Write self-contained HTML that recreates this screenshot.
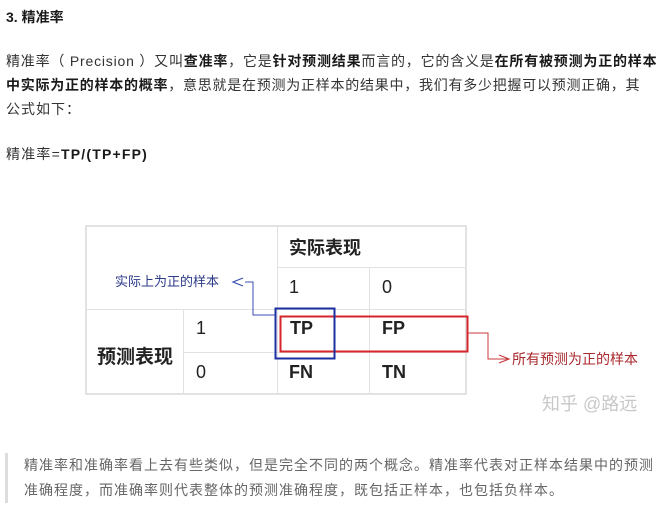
<!DOCTYPE html>
<html><head><meta charset="utf-8"><style>
body{margin:0;width:664px;height:514px;background:#fff;font-family:"Liberation Sans","Noto Sans CJK SC",sans-serif;color:#333;position:relative;overflow:hidden}
.a{position:absolute;white-space:nowrap;font-size:14px;line-height:24px}
b{color:#1a1a1a}
.c{position:absolute;font-size:18px;color:#222}
</style></head><body>
<div class="a" style="left:6px;top:5px;font-weight:bold;font-size:14px;color:#1a1a1a">3. 精准率</div>
<div class="a" style="left:6px;top:49px;letter-spacing:0.8px">精准率（ Precision ）又叫<b>查准率</b>，它是<b>针对预测结果</b>而言的，它的含义是<b>在所有被预测为正的样本</b></div>
<div class="a" style="left:6px;top:73px;letter-spacing:0.75px"><b>中实际为正的样本的概率</b>，意思就是在预测为正样本的结果中，我们有多少把握可以预测正确，其</div>
<div class="a" style="left:6px;top:97px;letter-spacing:1px">公式如下：</div>
<div class="a" style="left:6px;top:142px;letter-spacing:1.2px;font-size:14px">精准率=<b>TP/(TP+FP)</b></div>

<div style="position:absolute;left:85px;top:225px;width:382px;height:170px;border:2px solid #e2e2e2;box-sizing:border-box"></div>
<div style="position:absolute;left:277px;top:225px;width:1px;height:170px;background:#e2e2e2"></div>
<div style="position:absolute;left:183px;top:309px;width:1px;height:86px;background:#e2e2e2"></div>
<div style="position:absolute;left:369px;top:267px;width:1px;height:128px;background:#e2e2e2"></div>
<div style="position:absolute;left:277px;top:267px;width:190px;height:1px;background:#e2e2e2"></div>
<div style="position:absolute;left:85px;top:309px;width:382px;height:1px;background:#e2e2e2"></div>
<div style="position:absolute;left:183px;top:352px;width:284px;height:1px;background:#e2e2e2"></div>

<div class="c" style="left:289px;top:234px;font-weight:bold">实际表现</div>
<div class="c" style="left:289px;top:277px">1</div>
<div class="c" style="left:382px;top:277px">0</div>
<div class="c" style="left:97px;top:342px;font-weight:bold;font-size:19px">预测表现</div>
<div class="c" style="left:196px;top:318px">1</div>
<div class="c" style="left:196px;top:362px">0</div>
<div class="c" style="left:290px;top:318px;font-weight:bold">TP</div>
<div class="c" style="left:382px;top:318px;font-weight:bold">FP</div>
<div class="c" style="left:289px;top:362px;font-weight:bold">FN</div>
<div class="c" style="left:382px;top:362px;font-weight:bold">TN</div>

<svg style="position:absolute;left:0;top:0" width="664" height="514">
<rect x="280.5" y="316.5" width="187" height="35" fill="none" stroke="#d6262b" stroke-width="2"/>
<rect x="275.5" y="308.5" width="59" height="50" fill="none" stroke="#1b2fa0" stroke-width="2"/>
<polyline points="245,282 253,282 253,315 275,315" fill="none" stroke="#3a4db0" stroke-width="1"/>
<polyline points="243,278 233,282 243,286" fill="none" stroke="#3a4db0" stroke-width="1.2"/>
<polyline points="468,333 488,333 488,359 508,359" fill="none" stroke="#c8383c" stroke-width="1"/>
<polyline points="499,355 509,359 499,363" fill="none" stroke="#c8383c" stroke-width="1.2"/>
</svg>
<div class="a" style="left:115px;top:270px;font-size:13px;color:#2c3a8a">实际上为正的样本</div>
<div class="a" style="left:512px;top:347px;font-size:14px;color:#a8282c">所有预测为正的样本</div>
<div class="a" style="left:542px;top:392px;font-size:18px;color:#c8c8c8">知乎 @路远</div>

<div style="position:absolute;left:5px;top:453px;width:3px;height:50px;background:#ddd"></div>
<div class="a" style="left:24px;top:453px;color:#666;line-height:25px;letter-spacing:1px">精准率和准确率看上去有些类似，但是完全不同的两个概念。精准率代表对正样本结果中的预测<br>准确程度，而准确率则代表整体的预测准确程度，既包括正样本，也包括负样本。</div>
</body></html>
